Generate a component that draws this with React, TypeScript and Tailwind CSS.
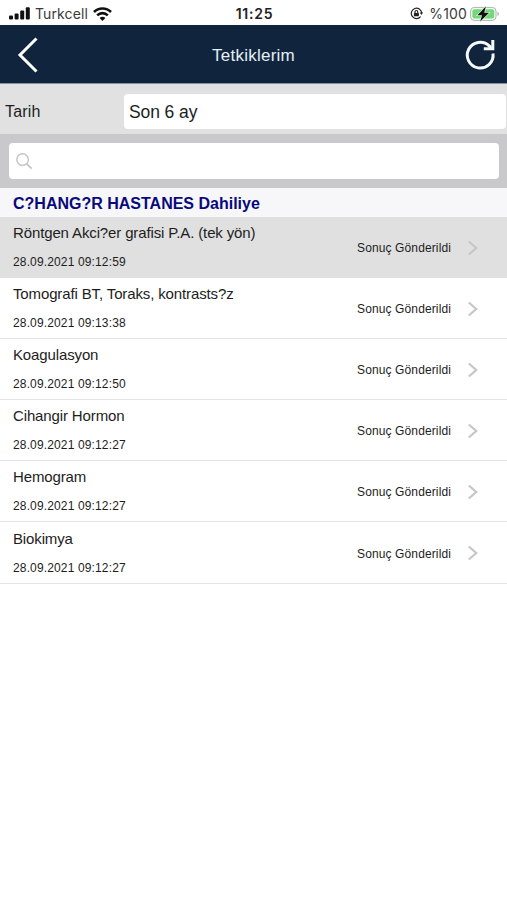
const rows = [
  { name: "Röntgen Akci?er grafisi P.A. (tek yön)", date: "28.09.2021 09:12:59", selected: true },
  { name: "Tomografi BT, Toraks, kontrasts?z", date: "28.09.2021 09:13:38" },
  { name: "Koagulasyon", date: "28.09.2021 09:12:50" },
  { name: "Cihangir Hormon", date: "28.09.2021 09:12:27" },
  { name: "Hemogram", date: "28.09.2021 09:12:27" },
  { name: "Biokimya", date: "28.09.2021 09:12:27" },
];

function StatusBar() {
  return (
    <div className="flex h-[25px] items-center bg-white pl-[9px] pr-[7px] pt-[2px] font-['Inter',sans-serif] text-[#3a3a3a]">
      <div className="flex flex-1 items-center">
        <svg width="22" height="13" viewBox="0 0 22 13" fill="#111">
          <rect x="0" y="8.5" width="4" height="4" rx="1" />
          <rect x="5.6" y="6.5" width="4" height="6" rx="1" />
          <rect x="11.2" y="3.5" width="4" height="9" rx="1" />
          <rect x="16.8" y="0.3" width="4" height="12.2" rx="1" />
        </svg>
        <span className="ml-[4px] text-[14px] leading-5 tracking-[0.1px]">Turkcell</span>
        <svg className="ml-[5px]" width="19" height="14" viewBox="0 0 19 14" fill="none" stroke="#111" strokeWidth="2.6">
          <path d="M1 5C5.6 0.4 13.4 0.4 18 5" />
          <path d="M4.2 8.4C7.2 5.4 11.8 5.4 14.8 8.4" />
          <path d="M9.5 14L6.6 10.9C8.2 9.4 10.8 9.4 12.4 10.9Z" fill="#111" stroke="none" />
        </svg>
      </div>
      <span className="text-[14px] font-semibold leading-5 tracking-[0.75px] text-[#222]">11:25</span>
      <div className="flex flex-1 items-center justify-end">
        <svg width="13" height="13" viewBox="0 0 13 13" fill="none" stroke="#222" strokeWidth="1.2">
          <path d="M10.6 9.6A5.2 5.2 0 1 1 11.7 6" />
          <path d="M9.8 5.6H13L11.4 8Z" fill="#222" stroke="none" />
          <rect x="3.9" y="5.9" width="5" height="3.4" rx="0.5" fill="#222" stroke="none" />
          <path d="M5 6V4.9a1.4 1.4 0 0 1 2.8 0V6" />
        </svg>
        <span className="ml-[6px] text-[14px] leading-5 tracking-[0.15px]">%100</span>
        <svg className="ml-[3px]" width="30" height="16" viewBox="0 0 30 16">
          <rect x="0.6" y="1.4" width="25.4" height="13" rx="3.6" fill="#f4f8f4" stroke="#b0b4b0" />
          <rect x="2.4" y="3.2" width="21.8" height="9.4" rx="2" fill="#72d878" />
          <path d="M27.5 5.8c1.8.7 1.8 3.6 0 4.3Z" fill="#aaa" />
          <path d="M15.8 0.4L7.4 9.2H12L10.2 15.6L19 6.8H14.2Z" fill="#111" stroke="#d8f2d8" strokeWidth="1.4" paintOrder="stroke" />
        </svg>
      </div>
    </div>
  );
}

function NavBar() {
  return (
    <header className="flex h-[59px] items-center border-b border-[#8090a5] bg-[#10243d] pl-[17px] pr-[11px] pt-px">
      <div className="flex-1">
        <svg width="32" height="36" viewBox="0 0 32 36" fill="none" stroke="#fff" strokeWidth="3">
          <path d="M19.5 1.5L3 18L19.5 34.5" />
        </svg>
      </div>
      <h1 className="mr-[6px] pt-[2px] text-[17px] leading-6 tracking-[0.25px] text-[#e4f0f6]">Tetkiklerim</h1>
      <div className="flex flex-1 justify-end">
        <svg width="32" height="32" viewBox="0 0 32 32" fill="none" stroke="#f5faff" strokeWidth="3">
          <path d="M29 14.5A12.9 12.9 0 1 1 25.2 6.9L28 9.8" />
          <path d="M28.8 1V9.8H19.8" />
        </svg>
      </div>
    </header>
  );
}

export default function App() {
  return (
    <div className="h-[900px] w-[507px] overflow-hidden bg-white font-['Liberation_Sans',Arial,sans-serif] text-[#1d1d1d]">
      <StatusBar />
      <NavBar />
      <div className="flex h-[50px] items-center bg-[#e1e1e2] pl-[5px] pr-px pt-1">
        <span className="w-[119px] pt-px text-[16px] leading-5 tracking-[0.15px]">Tarih</span>
        <div className="flex h-[35px] flex-1 items-center rounded-[4px] bg-white pl-[5px] pt-px text-[17.5px] leading-6 tracking-[-0.1px]">
          Son 6 ay
        </div>
      </div>
      <div className="h-[54px] bg-[#c9c9cc] px-[8.5px] pt-[9px]">
        <div className="flex h-[36px] items-center rounded-[4px] bg-white pl-[7.5px] pt-px">
          <svg width="17" height="17" viewBox="0 0 17 17" fill="none" stroke="#c3c3c3" strokeWidth="1.4">
            <circle cx="6.6" cy="6.6" r="5.8" />
            <path d="M10.8 10.8L15.6 15.6" strokeWidth="1.8" />
          </svg>
        </div>
      </div>
      <h2 className="flex h-[29px] items-center bg-[#f7f7f9] pl-[13px] pt-[2px] text-[16px] font-bold leading-5 text-[#09097c]">
        C?HANG?R HASTANES Dahiliye
      </h2>
      <ul>
        {rows.map((row) => (
          <li
            key={row.name}
            className={`flex h-[61.1px] items-center border-b pl-[13px] pr-[28px] ${row.selected ? "border-[#e0e0e0] bg-[#e0e0e0]" : "border-[#e4e4e4] bg-white"}`}
          >
            <div className="flex-1 pb-px">
              <p className="text-[15px] leading-5 tracking-[-0.13px]">{row.name}</p>
              <p className="mt-[11px] text-[12px] leading-4 tracking-[0.14px]">{row.date}</p>
            </div>
            <span className="pt-[2px] text-[12px] leading-4 tracking-[0.12px]">Sonuç Gönderildi</span>
            <svg className="ml-[16px] mt-px" width="12" height="16" viewBox="0 0 12 16" fill="none" stroke="#c7c7c9" strokeWidth="2.3">
              <path d="M1.8 1.5L9.2 8L1.8 14.5" />
            </svg>
          </li>
        ))}
      </ul>
    </div>
  );
}
